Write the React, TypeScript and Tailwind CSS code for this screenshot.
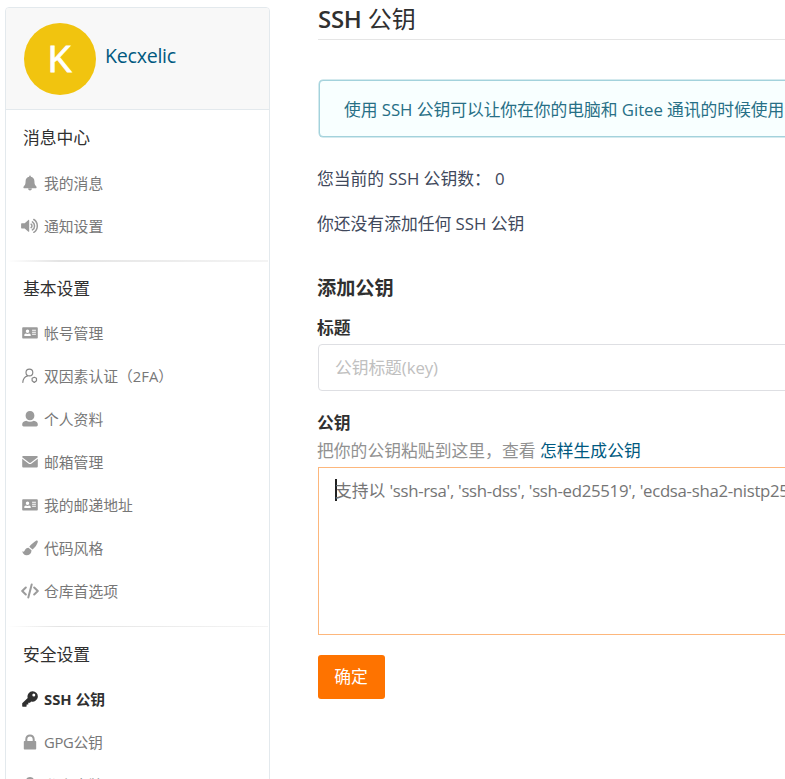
import type { ReactNode } from "react";

const gray = "#9b9b9b";

function Glyph({ children, color = gray, w = 16, box = "0 0 16 16" }: { children: ReactNode; color?: string; w?: number; box?: string }) {
  return (
    <svg width={w} height={16} viewBox={box} fill={color} className="shrink-0">
      {children}
    </svg>
  );
}

const Bell = () => (
  <Glyph>
    <path d="M7.2 1.2a.8.8 0 0 1 1.6 0v.6c2.2.4 3.6 2.1 3.6 4.3 0 3.5.9 4.4 1.9 5.3.7.8.2 1.800-.8 1.800H2.500c-1 0-1.500-1-.8-1.800 1-.9 1.900-1.800 1.900-5.300 0-2.200 1.400-3.900 3.600-4.300zM6.100 13.600h3.800a1.900 1.900 0 0 1-3.800 0z" />
  </Glyph>
);
const Volume = () => (
  <Glyph w={18} box="0 0 18 16">
    <path d="M.7 5.3h3L7.4 2c.4-.3.8-.2.8.4v10.9c0 .6-.4.7-.8.4l-3.700-3.300h-3a.6.6 0 0 1-.6-.6V5.900c0-.3.2-.6.6-.6z" />
    <g fill="none" stroke={gray} strokeWidth="1.5" strokeLinecap="round">
      <path d="M10.100 6.200a2.100 2.100 0 0 1 0 3.400M11.400 3.900a4.800 4.800 0 0 1 0 8M12.800 1.500a7.600 7.600 0 0 1 0 12.800" />
    </g>
  </Glyph>
);
const Card = () => (
  <Glyph>
    <path fillRule="evenodd" d="M1.300 2.200h13.400c.7 0 1.100.4 1.100 1.100v9.100c0 .7-.4 1.100-1.100 1.100H1.300c-.7 0-1.100-.4-1.100-1.100V3.300c0-.7.4-1.100 1.100-1.100zM5.500 4.600a1.750 1.750 0 1 0 0 3.500 1.750 1.750 0 0 0 0-3.500zM3.900 8.500c-1 .2-1.600.8-1.600 1.700v.7h6.400v-.7c0-.9-.6-1.500-1.600-1.700-.9.5-2.300.5-3.200 0zM10.100 4.800v1h3.800v-1zm0 2v1h3.800v-1zm0 2v1h3.800v-1z" />
  </Glyph>
);
const UserShield = () => (
  <Glyph>
    <g fill="none" stroke="#858585" strokeWidth="1.15" strokeLinecap="round" strokeLinejoin="round">
      <circle cx="7.400" cy="4.500" r="3.400" />
      <path d="M.8 14.400c.3-3.500 2.200-5.700 4.700-6.500" />
      <path d="M12.300 9.300l2.200 1v2.500l-2.200 1.700-2.200-1.700v-2.500z" />
    </g>
  </Glyph>
);
const User = () => (
  <Glyph>
    <path d="M8 .1c2.600 0 4.400 2 4.400 4.600S10.600 9.300 8 9.300 3.600 7.300 3.600 4.700 5.400.1 8 .1zM4.300 9.700c2.100 1.300 5.300 1.300 7.400 0 2.600.2 4.100 1.700 4.100 3.700v.7c0 .8-.6 1.400-1.400 1.400H1.600c-.8 0-1.400-.6-1.400-1.400v-.7c0-2 1.500-3.500 4.100-3.700z" />
  </Glyph>
);
const Mail = () => (
  <Glyph>
    <path d="M1.500 2.100h13c.8 0 1.300.5 1.300 1.200L9 8.500c-.7.5-1.300.5-2 0L.2 3.300c0-.7.5-1.200 1.300-1.200zM.2 4.800l6.200 4.700c1 .8 2.200.8 3.200 0l6.200-4.700v7.400c0 .8-.5 1.300-1.300 1.300h-13c-.8 0-1.300-.5-1.300-1.300z" />
  </Glyph>
);
const Brush = () => (
  <Glyph>
    <path d="M14 .7c.9-.6 2.100.2 1.800 1.300-.6 2.300-2.700 5.600-5.300 7.500L7.300 6.800C9 4.500 11.800 2 14 .7zM6.500 7.700l3 2.500c.1 3.300-2 5-5 5-2.300 0-3.900-1.500-4.200-3.900 1 .6 1.900.7 2.400-.7.6-1.900 1.900-2.900 3.800-2.900z" />
  </Glyph>
);
const Code = () => (
  <Glyph w={18} box="0 0 18 16">
    <g fill="none" stroke={gray} strokeWidth="2" strokeLinecap="round" strokeLinejoin="round">
      <path d="M4.800 4.500L1.200 8l3.600 3.500M13.200 4.500L16.800 8l-3.600 3.500M10.700 1.500L7.300 14.500" />
    </g>
  </Glyph>
);
const Key = () => (
  <Glyph color="#2f2f2f">
    <path fillRule="evenodd" d="M10.600.3a5.200 5.200 0 1 1-1.400 10.200L8 11.800H6.300v1.700H4.600v1.700c0 .3-.2.5-.5.5H.8c-.3 0-.6-.2-.6-.5v-2.900L5.700 7A5.200 5.200 0 0 1 10.600.3zM11.800 2.600a1.500 1.500 0 1 0 0 3 1.500 1.500 0 0 0 0-3z" />
  </Glyph>
);
const Lock = () => (
  <Glyph>
    <path fillRule="evenodd" d="M3.300 7V5.200C3.300 2.400 5.200.4 8 .4s4.700 2 4.700 4.800V7h.5c.6 0 1 .4 1 1v6.400c0 .6-.4 1-1 1H2.800c-.6 0-1-.4-1-1V8c0-.6.4-1 1-1zM5.300 7h5.400V5.200C10.700 3.500 9.700 2.400 8 2.400S5.300 3.500 5.300 5.200z" />
  </Glyph>
);

function Item({ icon, children, active = false }: { icon: ReactNode; children: ReactNode; active?: boolean }) {
  return (
    <li className={"flex h-[43px] items-center " + (active ? "font-bold text-[#303030]" : "font-[370] text-[#777777]")}>
      <span className="mr-[5px] flex w-[18px] justify-center">{icon}</span>
      <span className="text-[14.8px] leading-5">{children}</span>
    </li>
  );
}

function Section({ title, heading, children }: { title: string; heading: string; children: ReactNode }) {
  return (
    <section>
      <h3 className={"pl-[17px] text-[16.8px] leading-6 text-[#303030] " + heading}>{title}</h3>
      <ul className="pl-[15px]">{children}</ul>
    </section>
  );
}

const Divider = ({ className }: { className: string }) => (
  <div className={"mx-px bg-linear-to-r from-white via-[#e4e4e4] via-20% to-[#f4f4f4] " + className} />
);

function Sidebar() {
  return (
    <aside className="ml-[5px] mt-[7px] h-[790px] w-[265px] shrink-0 overflow-hidden rounded border border-[#e3e9ed] bg-white">
      <header className="flex h-[102px] items-center border-b border-[#e3e9ed] bg-[#f8f8f8] pl-[18px]">
        <div className="flex size-[72px] items-center justify-center rounded-full bg-[#f1c40f] pt-0.5 font-['Liberation_Sans',sans-serif] text-[36px] text-white [-webkit-text-stroke:0.8px_white]">K</div>
        <span className="mb-1.5 ml-[9px] text-[19.6px] tracking-[-0.25px] text-[#005980]">Kecxelic</span>
      </header>
      <Section title="消息中心" heading="h-[51px] pt-4">
        <Item icon={<Bell />}>我的消息</Item>
        <Item icon={<Volume />}>通知设置</Item>
      </Section>
      <Divider className="mt-[13px] h-0.5" />
      <Section title="基本设置" heading="h-[49px] pt-[15px]">
        <Item icon={<Card />}>帐号管理</Item>
        <Item icon={<UserShield />}>双因素认证（2FA）</Item>
        <Item icon={<User />}>个人资料</Item>
        <Item icon={<Mail />}>邮箱管理</Item>
        <Item icon={<Card />}>我的邮递地址</Item>
        <Item icon={<Brush />}>代码风格</Item>
        <Item icon={<Code />}>仓库首选项</Item>
      </Section>
      <Divider className="mt-3.5 h-px" />
      <Section title="安全设置" heading="h-[50px] pt-4">
        <Item icon={<Key />} active>SSH 公钥</Item>
        <Item icon={<Lock />}><span className="tracking-[-0.3px]">GPG公钥</span></Item>
        <Item icon={<User />}>私人令牌</Item>
      </Section>
    </aside>
  );
}

export default function App() {
  return (
    <div className="flex h-[779px] w-[785px] overflow-hidden bg-white font-['Open_Sans','Noto_Sans_CJK_SC',sans-serif] text-[16.8px] leading-6 text-[#40485b]">
      <Sidebar />
      <main className="ml-12 w-[600px] shrink-0 whitespace-nowrap">
        <h1 className="h-10 border-b border-[#e5e5e5] pt-[3px] text-[24px] leading-8 text-[#303030]">
          <span className="font-[560] tracking-[-0.3px]">SSH</span> 公钥
        </h1>
        <div className="ml-px mt-10 h-[57px] rounded border border-[#a3d2dc] bg-[#f8ffff] pl-6 pt-[17px] font-[370] tracking-[-0.05px] text-[#276f86] shadow-[0_0_0_0.5px_#a9d5de]">
          使用 SSH 公钥可以让你在你的电脑和 Gitee 通讯的时候使用安全连接
        </div>
        <p className="-ml-px mt-[30px] font-[370]">您当前的 SSH 公钥数： 0</p>
        <p className="-ml-px mt-[21px] font-[370]">你还没有添加任何 SSH 公钥</p>
        <h2 className="-ml-px mt-10 text-[19.2px] font-bold text-[#303030]">添加公钥</h2>
        <h3 className="-ml-px mt-4 font-bold text-[#303030]">标题</h3>
        <div className="mt-[4px] h-[47px] rounded-[4px] border border-[#dedfe3] pl-4 pt-[11px] font-[370] tracking-[-0.08px] text-[#c0c0c0]">公钥标题(key)</div>
        <h3 className="-ml-px mt-5 font-bold text-[#303030]">公钥</h3>
        <p className="-ml-px mt-1 font-[370] tracking-[0.03px] text-[#919191]">
          把你的公钥粘贴到这里，查看 <a className="text-[#005980]">怎样生成公钥</a>
        </p>
        <div className="mt-1 flex h-[168px] border border-[#fdb77c] pl-4 pt-[11px] font-[370] tracking-[-0.3px] text-[#757575]">
          <span className="-mr-0.5 h-[22px] w-0.5 bg-[#202020]" />
          <span><span className="tracking-normal">支持以</span> 'ssh-rsa', 'ssh-dss', 'ssh-ed25519', 'ecdsa-sha2-nistp256'</span>
        </div>
        <button className="mt-5 h-11 w-[67px] rounded-[3px] bg-[#fe7300] pr-px text-white">确定</button>
      </main>
    </div>
  );
}
